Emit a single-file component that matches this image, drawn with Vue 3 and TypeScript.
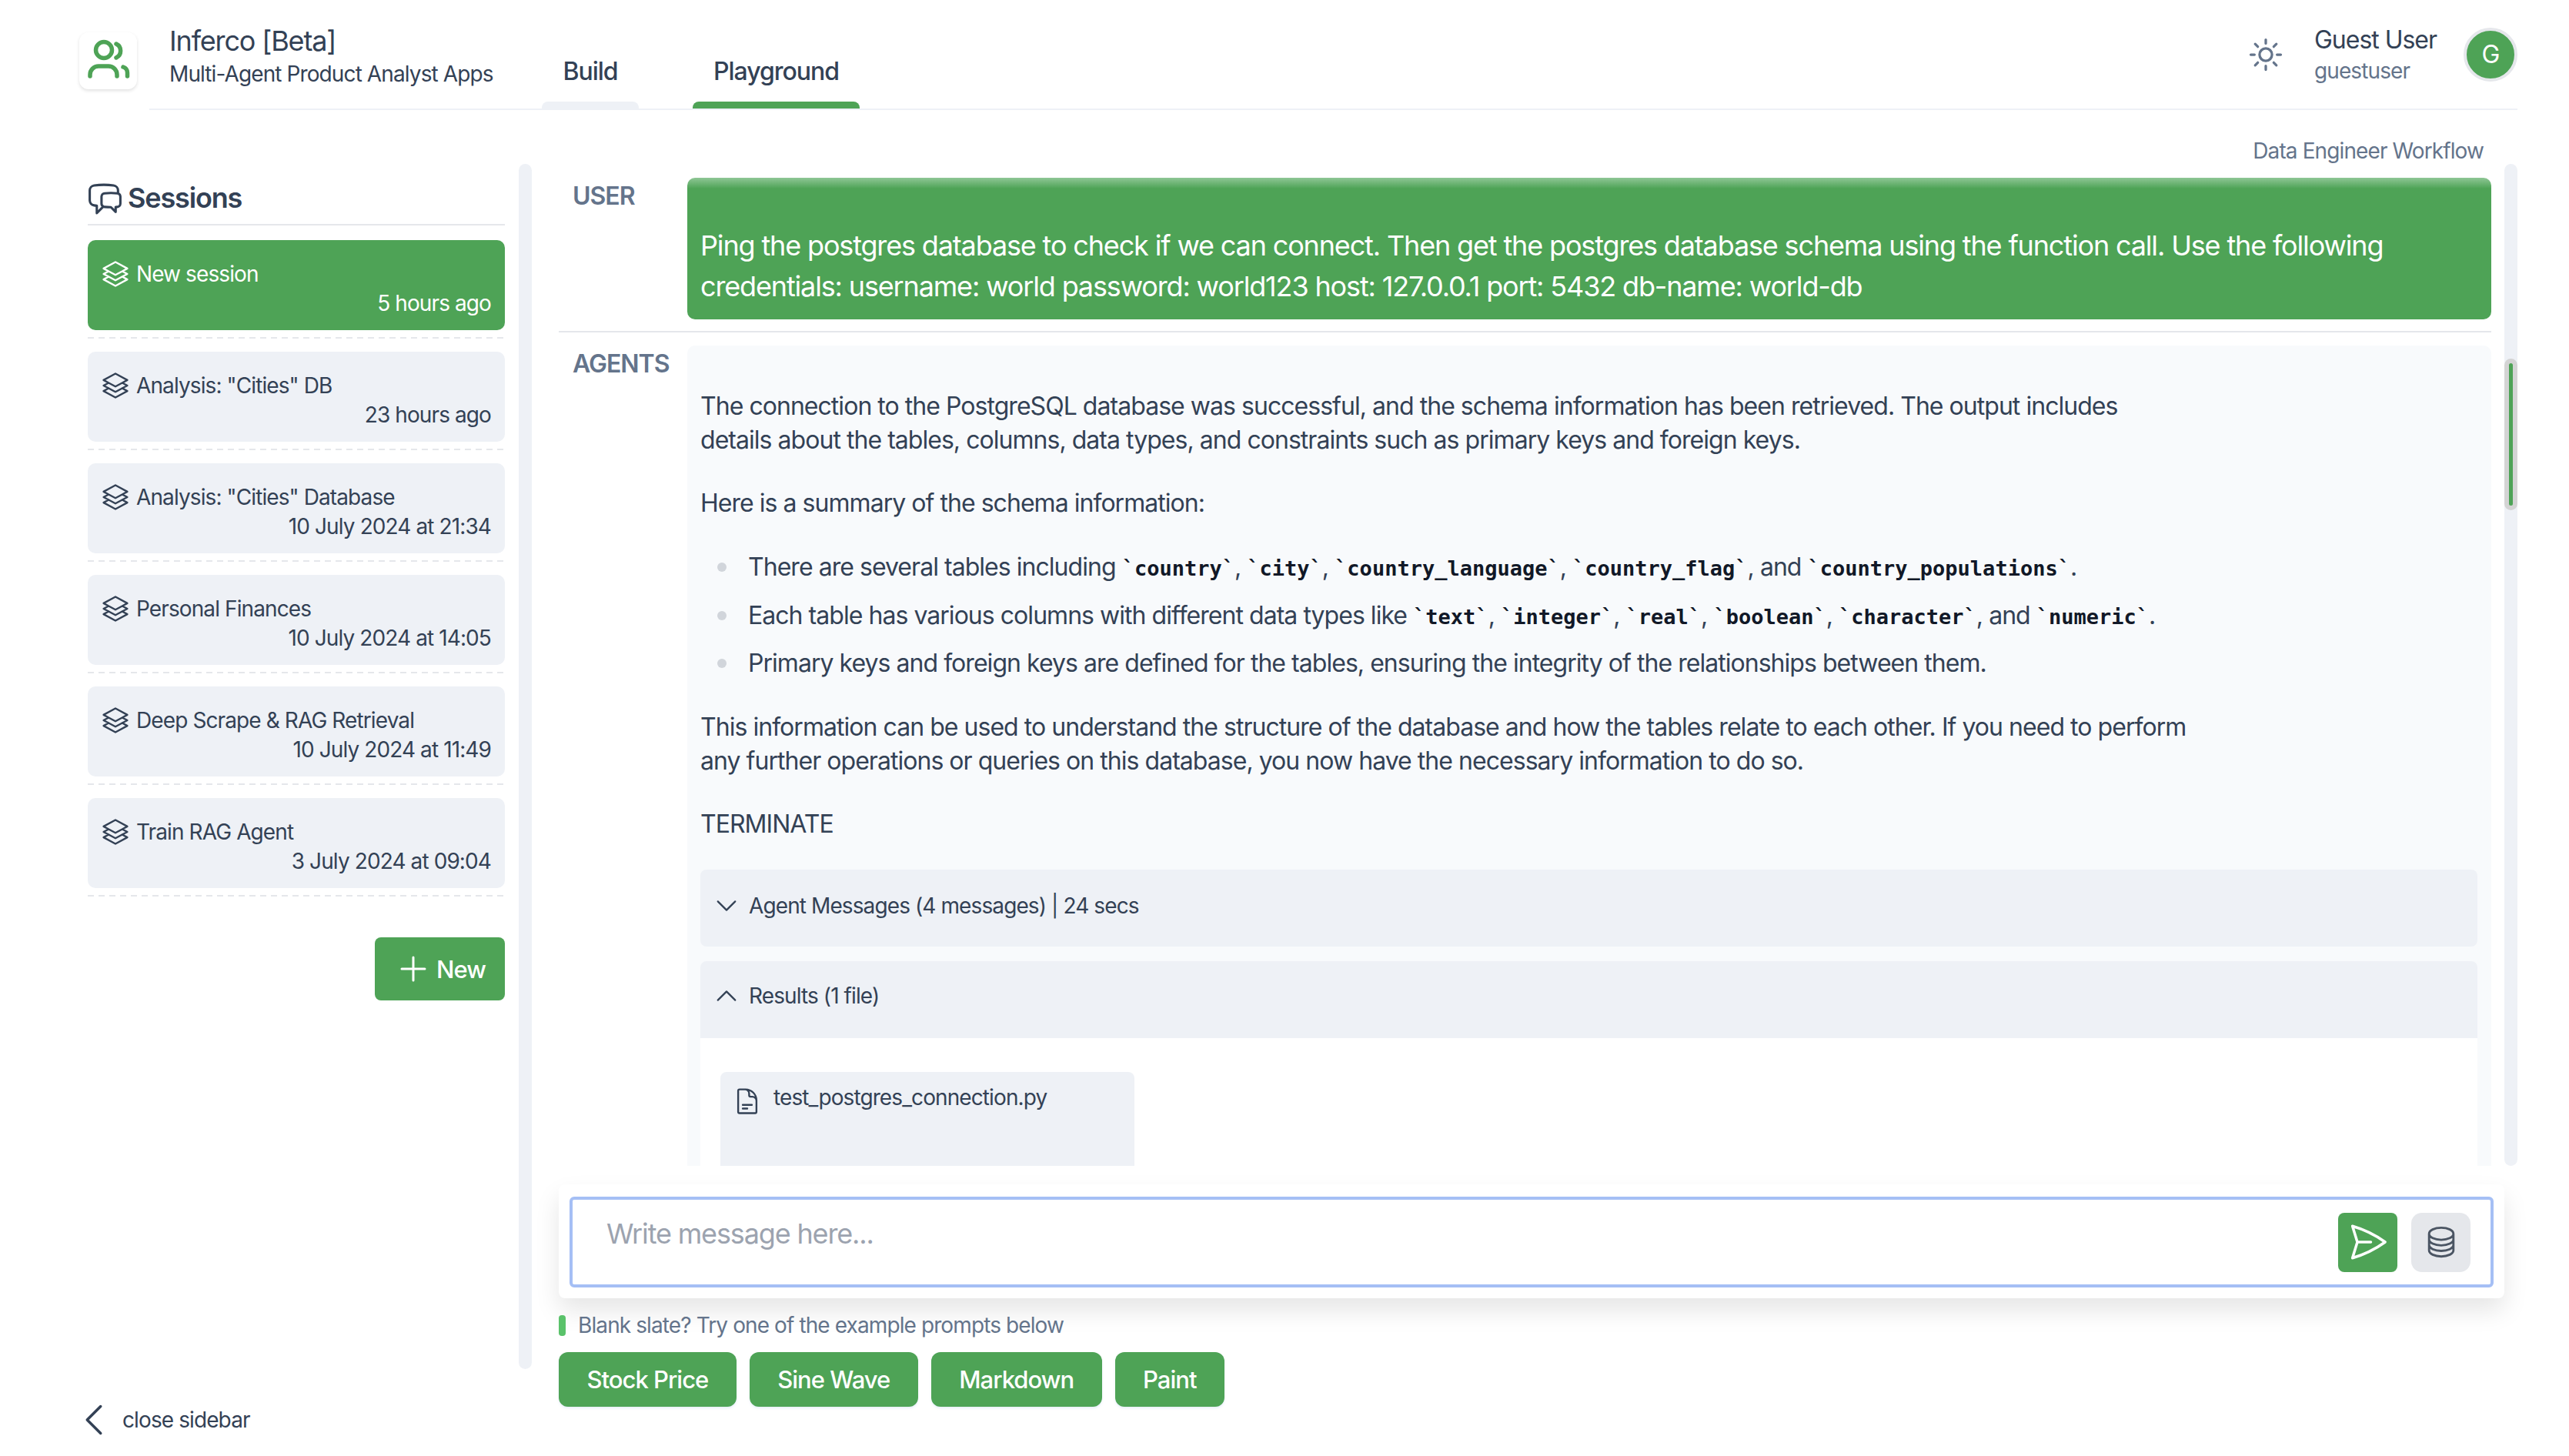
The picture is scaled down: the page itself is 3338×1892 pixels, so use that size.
<template>
  <div class="app">
    <header class="topbar">
      <div class="logo">
        <svg viewBox="0 0 75 75" class="logo-icon"><circle cx="32" cy="23" r="10.5" /><path d="M48 15a10 10 0 0 1 0 18" /><path d="M14 57v-2a11 11 0 0 1 11-11h13a11 11 0 0 1 11 11v2" /><path d="M57 45a8 8 0 0 1 5.500 7.500v4.500" /></svg>
      </div>
      <div class="topbar-main">
        <div class="brand">
          <div class="brand-title">Inferco [Beta]</div>
          <div class="brand-sub">Multi-Agent Product Analyst Apps</div>
        </div>
        <nav class="tabs">
          <div class="tab">Build<span class="tab-bar"></span></div>
          <div class="tab tab-on">Playground<span class="tab-bar"></span></div>
        </nav>
        <div class="user-area">
          <svg viewBox="0 0 24 24" class="sun"><path d="M12 3v2.25m6.364.386l-1.591 1.591M21 12h-2.25m-.386 6.364l-1.591-1.591M12 18.75V21m-4.773-4.227l-1.591 1.591M5.25 12H3m4.227-4.773L5.636 5.636M15.75 12a3.75 3.75 0 11-7.5 0 3.75 3.75 0 017.5 0z" /></svg>
          <div class="user-names">
            <div class="user-name">Guest User</div>
            <div class="user-login">guestuser</div>
          </div>
          <div class="avatar">G</div>
        </div>
      </div>
    </header>

    <div class="body">
      <aside class="sidebar">
        <div class="side-panel">
          <div class="side-list">
            <div class="side-head">
              <svg viewBox="0 0 24 24" class="chat-icon"><path d="M20.25 8.511c.884.284 1.5 1.128 1.5 2.097v4.286c0 1.136-.847 2.1-1.98 2.193-.34.027-.68.052-1.02.072v3.091l-3-3c-1.354 0-2.694-.055-4.02-.163a2.115 2.115 0 01-.825-.242m9.345-8.334a2.126 2.126 0 00-.476-.095 48.64 48.64 0 00-8.048 0c-1.131.094-1.976 1.057-1.976 2.192v4.286c0 .837.46 1.58 1.155 1.951m9.345-8.334V6.637c0-1.621-1.152-3.026-2.76-3.235A48.455 48.455 0 0011.25 3c-2.115 0-4.198.137-6.24.402-1.608.209-2.76 1.614-2.76 3.235v6.226c0 1.621 1.152 3.026 2.76 3.235.577.075 1.157.14 1.74.194V21l4.155-4.155" /></svg>
              <span>Sessions</span>
            </div>
            <div v-for="(s, i) in sessions" :key="s.title" class="session-wrap">
              <div class="session" :class="{ 'session-on': i === 0 }">
                <div class="session-title">
                  <svg viewBox="0 0 24 24" class="stack-icon"><path d="M6.429 9.750L2.250 12l4.179 2.250m0-4.500l5.571 3 5.571-3m-11.142 0L2.250 7.500 12 2.250l9.750 5.250-4.179 2.250m0 0L21.750 12l-4.179 2.250m0 0l4.179 2.250L12 21.750 2.250 16.500l4.179-2.250m11.142 0l-5.571 3-5.571-3" /></svg>
                  <span>{{ s.title }}</span>
                </div>
                <div class="session-time">{{ s.time }}</div>
              </div>
            </div>
            <div class="new-row">
              <button class="new-btn">
                <svg viewBox="0 0 24 24" class="plus-icon"><path d="M12 4.5v15m7.5-7.5h-15" /></svg>
                New
              </button>
            </div>
          </div>
          <div class="track"></div>
        </div>
        <div class="close-row">
          <svg viewBox="0 0 24 24" class="close-icon"><path d="M15.75 19.5L8.25 12l7.5-7.5" /></svg>
          <span>close sidebar</span>
        </div>
      </aside>

      <main class="main">
        <div class="workflow">Data Engineer Workflow</div>
        <div class="scroller">
          <div class="messages">
            <div class="msg msg-user">
              <div class="role">USER</div>
              <div class="bubble bubble-user">
                Ping the postgres database to check if we can connect. Then get the postgres database schema using the function call. Use the following<br />credentials: username: world password: world123 host: 127.0.0.1 port: 5432 db-name: world-db
              </div>
            </div>
            <div class="msg msg-agents">
              <div class="role">AGENTS</div>
              <div class="bubble bubble-agent">
                <div class="prose">
                  <p>The connection to the PostgreSQL database was successful, and the schema information has been retrieved. The output includes<br />details about the tables, columns, data types, and constraints such as primary keys and foreign keys.</p>
                  <p>Here is a summary of the schema information:</p>
                  <ul>
                    <li>There are several tables including <code>`country`</code>, <code>`city`</code>, <code>`country_language`</code>, <code>`country_flag`</code>, and <code>`country_populations`</code>.</li>
                    <li>Each table has various columns with different data types like <code>`text`</code>, <code>`integer`</code>, <code>`real`</code>, <code>`boolean`</code>, <code>`character`</code>, and <code>`numeric`</code>.</li>
                    <li>Primary keys and foreign keys are defined for the tables, ensuring the integrity of the relationships between them.</li>
                  </ul>
                  <p>This information can be used to understand the structure of the database and how the tables relate to each other. If you need to perform<br />any further operations or queries on this database, you now have the necessary information to do so.</p>
                  <p>TERMINATE</p>
                </div>
                <div class="accordion">
                  <svg viewBox="0 0 24 24" class="acc-icon"><path d="M19.5 8.25l-7.5 7.5-7.5-7.5" /></svg>
                  <span>Agent Messages (4 messages) | 24 secs</span>
                </div>
                <div class="accordion accordion-open">
                  <svg viewBox="0 0 24 24" class="acc-icon"><path d="M4.5 15.75l7.5-7.5 7.5 7.5" /></svg>
                  <span>Results (1 file)</span>
                </div>
                <div class="results">
                  <div class="file-card">
                    <svg viewBox="0 0 24 24" class="file-icon"><path d="M19.5 14.25v-2.625a3.375 3.375 0 00-3.375-3.375h-1.5A1.125 1.125 0 0113.5 7.125v-1.5a3.375 3.375 0 00-3.375-3.375H8.25m0 12.75h7.5m-7.5 3H12M10.5 2.25H5.625c-.621 0-1.125.504-1.125 1.125v17.25c0 .621.504 1.125 1.125 1.125h12.75c.621 0 1.125-.504 1.125-1.125V11.25a9 9 0 00-9-9z" /></svg>
                    <span>test_postgres_connection.py</span>
                  </div>
                </div>
              </div>
            </div>
          </div>
          <div class="track track-main"><div class="thumb"><span></span></div></div>
        </div>

        <div class="input-card">
          <div class="input-box">
            <div class="placeholder">Write message here...</div>
            <button class="icon-btn icon-send">
              <svg viewBox="0 0 24 24"><path d="M6 12L3.269 3.126A59.768 59.768 0 0121.485 12 59.77 59.77 0 013.27 20.876L5.999 12zm0 0h7.5" /></svg>
            </button>
            <button class="icon-btn icon-db">
              <svg viewBox="0 0 24 24"><path d="M20.25 6.375c0 2.278-3.694 4.125-8.25 4.125S3.75 8.653 3.75 6.375m16.5 0c0-2.278-3.694-4.125-8.25-4.125S3.75 4.097 3.75 6.375m16.5 0v11.25c0 2.278-3.694 4.125-8.25 4.125s-8.25-1.847-8.25-4.125V6.375m16.5 0v3.75m-16.5-3.75v3.75m16.5 0v3.75C20.25 16.153 16.556 18 12 18s-8.25-1.847-8.25-4.125v-3.75m16.5 0c0 2.278-3.694 4.125-8.25 4.125s-8.25-1.847-8.25-4.125" /></svg>
            </button>
          </div>
        </div>

        <div class="hint"><span class="hint-mark"></span>Blank slate? Try one of the example prompts below</div>
        <div class="prompts">
          <button v-for="p in prompts" :key="p" class="prompt">{{ p }}</button>
        </div>
      </main>
    </div>
  </div>
</template>

<script setup lang="ts">
const sessions = [
  { title: "New session", time: "5 hours ago" },
  { title: 'Analysis: "Cities" DB', time: "23 hours ago" },
  { title: 'Analysis: "Cities" Database', time: "10 July 2024 at 21:34" },
  { title: "Personal Finances", time: "10 July 2024 at 14:05" },
  { title: "Deep Scrape & RAG Retrieval", time: "10 July 2024 at 11:49" },
  { title: "Train RAG Agent", time: "3 July 2024 at 09:04" },
];

const prompts = ["Stock Price", "Sine Wave", "Markdown", "Paint"];
</script>

<style>
html,
body {
  margin: 0;
  background: #fff;
}
</style>

<style scoped>
.app {
  width: 3338px;
  height: 1892px;
  display: flex;
  flex-direction: column;
  overflow: hidden;
  background: #fff;
  color: #334155;
  font-family: Inter, "Noto Sans", sans-serif;
}
.app * {
  letter-spacing: -0.032em;
}
svg {
  fill: none;
  stroke: currentColor;
  stroke-linecap: round;
  stroke-linejoin: round;
  stroke-width: 1.5;
  flex: none;
}
button {
  font-family: inherit;
  border: 0;
}

/* header */
.topbar {
  height: 143px;
  flex: none;
  display: flex;
  padding: 0 67px 0 103px;
}
.logo {
  width: 75px;
  height: 74px;
  margin-top: 42px;
  border-radius: 12px;
  background: #fff;
  box-shadow: 0 2px 4px rgba(0, 0, 0, 0.12);
  color: #4ea356;
}
.logo-icon {
  width: 75px;
  height: 75px;
  stroke-width: 5.5;
}
.topbar-main {
  flex: 1;
  margin-left: 16px;
  padding-left: 26px;
  border-bottom: 2px solid #eef1f6;
  display: flex;
}
.brand {
  width: 484px;
  padding-top: 33px;
}
.brand-title {
  font-size: 36px;
  line-height: 40px;
}
.brand-sub {
  font-size: 28px;
  line-height: 40px;
  margin-top: 3px;
}
.tabs {
  display: flex;
  gap: 70px;
}
.tab {
  width: 126px;
  height: 141px;
  position: relative;
  display: flex;
  justify-content: center;
  padding-top: 72px;
  box-sizing: border-box;
  font-size: 32px;
  line-height: 42px;
  font-weight: 500;
}
.tab-on {
  width: 217px;
}
.tab-bar {
  position: absolute;
  left: 0;
  right: 0;
  bottom: 0;
  height: 9px;
  border-radius: 8px 8px 0 0;
  background: #eef1f6;
}
.tab-on .tab-bar {
  background: #4ea356;
}
.user-area {
  margin-left: auto;
  display: flex;
  align-items: center;
  height: 141px;
}
.sun {
  width: 52px;
  height: 52px;
  color: #64748b;
}
.user-names {
  margin-left: 37px;
  width: 194px;
}
.user-name {
  font-size: 32px;
  line-height: 40px;
}
.user-login {
  font-size: 28px;
  line-height: 36px;
  margin-top: 2px;
  color: #64748b;
}
.avatar {
  width: 62px;
  height: 62px;
  border: 4px solid #e5e7eb;
  border-radius: 50%;
  background: #4ea356;
  color: #fff;
  font-size: 32px;
  display: flex;
  align-items: center;
  justify-content: center;
}

/* body */
.body {
  flex: 1;
  display: flex;
  min-height: 0;
  padding: 0 67px 0 114px;
}
.sidebar {
  width: 577px;
  flex: none;
  display: flex;
  flex-direction: column;
  padding-top: 70px;
  box-sizing: border-box;
}
.side-panel {
  height: 1566px;
  flex: none;
  display: flex;
  gap: 18px;
}
.side-list {
  width: 542px;
  flex: none;
}
.side-head {
  height: 80px;
  box-sizing: border-box;
  display: flex;
  align-items: center;
  gap: 5px;
  font-size: 36px;
  font-weight: 600;
  border-bottom: 2px solid #e5e7eb;
  margin-bottom: 19px;
  padding: 10px 0 0 0;
}
.chat-icon {
  width: 49px;
  height: 49px;
  margin-left: -2px;
  margin-top: 2px;
}
.session-wrap {
  height: 145px;
  box-sizing: border-box;
  background: linear-gradient(90deg, #e5e7eb 8px, transparent 8px) repeat-x 0 126px / 14px 2px;
}
.session {
  height: 117px;
  box-sizing: border-box;
  border-radius: 10px;
  background: #eef1f6;
  padding: 25px 18px 0 17px;
  font-size: 28px;
  line-height: 38px;
}
.session-on {
  background: #4ea356;
  color: #fff;
}
.session-title {
  display: flex;
  align-items: center;
  gap: 8px;
}
.stack-icon {
  width: 38px;
  height: 38px;
}
.session-time {
  text-align: right;
}
.new-row {
  display: flex;
  justify-content: flex-end;
  margin-top: 36px;
}
.new-btn {
  width: 169px;
  height: 82px;
  border-radius: 8px;
  background: #4ea356;
  color: #fff;
  font-size: 31px;
  font-weight: 500;
  display: flex;
  align-items: center;
  padding: 0 0 0 26px;
  gap: 6px;
}
.plus-icon {
  width: 48px;
  height: 48px;
}
.track {
  width: 17px;
  flex: none;
  border-radius: 9px;
  background: #eef1f6;
  position: relative;
}
.close-row {
  display: flex;
  align-items: center;
  margin-top: 38px;
  font-size: 28px;
  line-height: 40px;
  color: #334155;
}
.close-icon {
  width: 56px;
  height: 56px;
  margin-left: -20px;
  margin-right: 9px;
}

/* main */
.main {
  flex: 1;
  min-width: 0;
  margin-left: 35px;
  display: flex;
  flex-direction: column;
}
.workflow {
  height: 70px;
  flex: none;
  display: flex;
  align-items: center;
  justify-content: flex-end;
  padding: 36px 44px 0 0;
  box-sizing: border-box;
  font-size: 28px;
  color: #64748b;
}
.scroller {
  height: 1302px;
  flex: none;
  display: flex;
  gap: 17px;
  overflow: hidden;
}
.messages {
  flex: 1;
  min-width: 0;
  padding-top: 18px;
}
.track-main {
  height: 1302px;
}
.thumb {
  position: absolute;
  top: 253px;
  left: 0;
  width: 17px;
  height: 197px;
  border-radius: 9px;
  background: #d4d4d4;
  display: flex;
  justify-content: center;
  padding: 6px 0;
  box-sizing: border-box;
}
.thumb span {
  width: 5px;
  border-radius: 3px;
  background: #4ea356;
}
.msg {
  display: flex;
}
.msg-user {
  height: 199px;
  border-bottom: 2px solid #e5e7eb;
  margin-bottom: 17px;
}
.role {
  width: 167px;
  flex: none;
  box-sizing: border-box;
  padding: 4px 0 0 18px;
  font-size: 32px;
  line-height: 40px;
  font-weight: 600;
  color: #64748b;
}
.bubble {
  flex: 1;
  min-width: 0;
  border-radius: 10px;
  box-sizing: border-box;
}
.bubble-user {
  height: 184px;
  background: linear-gradient(#8fc695, #4ea356 14px);
  color: #fff;
  font-size: 36px;
  line-height: 53px;
  padding: 62px 17px 0;
  white-space: nowrap;
}
.bubble-agent {
  background: #f8fafc;
  padding: 0 18px 0 17px;
  height: 1100px;
}
.prose {
  padding-top: 57px;
  font-size: 32px;
  line-height: 44px;
  height: 662px;
  box-sizing: border-box;
  white-space: nowrap;
}
.prose p {
  margin: 0 0 38px;
  letter-spacing: -0.03em;
}
.prose ul {
  margin: 0 0 21px;
  padding: 0 0 0 62px;
  list-style: none;
}
.prose li {
  position: relative;
  height: 62.5px;
  padding-top: 1px;
  box-sizing: border-box;
  letter-spacing: -0.03em;
}
.prose li::before {
  content: "";
  position: absolute;
  left: -40px;
  top: 17px;
  width: 12px;
  height: 12px;
  border-radius: 50%;
  background: #d1d5db;
}
.app code {
  font-family: "DejaVu Sans Mono", "Liberation Mono", monospace;
  font-size: 27px;
  font-weight: 700;
  color: #111827;
  letter-spacing: 0;
}
.accordion {
  height: 100px;
  margin-top: 19px;
  border-radius: 8px;
  background: #eef1f6;
  display: flex;
  align-items: center;
  padding: 0 0 6px 16px;
  box-sizing: border-box;
  font-size: 28px;
  gap: 11px;
}
.accordion-open {
  border-radius: 8px 8px 0 0;
  padding-bottom: 10px;
}
.acc-icon {
  width: 36px;
  height: 36px;
}
.results {
  background: #fff;
  padding: 44px 26px 0;
  height: 400px;
  box-sizing: border-box;
}
.file-card {
  width: 538px;
  height: 200px;
  box-sizing: border-box;
  border-radius: 8px;
  background: #eef1f6;
  padding: 15px 16px;
  display: flex;
  align-items: flex-start;
  gap: 15px;
  font-size: 28px;
  line-height: 36px;
}
.file-icon {
  width: 38px;
  height: 38px;
  margin-top: 4px;
}

/* input */
.input-card {
  width: 2528px;
  height: 148px;
  margin-top: 24px;
  flex: none;
  box-sizing: border-box;
  padding: 16px 14px 14px;
  border-radius: 8px;
  background: #fff;
  box-shadow: 0 16px 32px rgba(0, 0, 0, 0.1);
  position: relative;
}
.input-box {
  height: 118px;
  box-sizing: border-box;
  border: 4px solid #a5bff5;
  border-radius: 6px;
  display: flex;
  align-items: center;
  padding-right: 26px;
}
.placeholder {
  flex: 1;
  padding: 0 0 22px 44px;
  font-size: 36px;
  color: #9ca3af;
}
.icon-btn {
  width: 77px;
  height: 77px;
  padding: 0;
  border-radius: 8px;
  display: flex;
  align-items: center;
  justify-content: center;
}
.icon-btn svg {
  width: 56px;
  height: 56px;
}
.icon-send {
  background: #4ea356;
  color: #fff;
  margin-right: 18px;
}
.icon-db {
  background: #e5e7eb;
  color: #4b5563;
  border-radius: 14px;
}
.icon-db svg {
  width: 46px;
  height: 46px;
}
.hint {
  display: flex;
  align-items: center;
  margin-top: 18px;
  height: 34px;
  font-size: 28px;
  color: #64748b;
  position: relative;
}
.hint-mark {
  width: 9px;
  height: 27px;
  border-radius: 4px;
  background: #5ac26a;
  margin-right: 16px;
}
.prompts {
  display: flex;
  gap: 17px;
  margin-top: 18px;
}
.prompt {
  height: 71px;
  padding: 0 36.5px;
  border-radius: 12px;
  background: #4ea356;
  color: #fff;
  font-size: 31px;
  font-weight: 500;
  box-shadow: 0 2px 3px rgba(165, 191, 245, 0.25);
}
</style>
